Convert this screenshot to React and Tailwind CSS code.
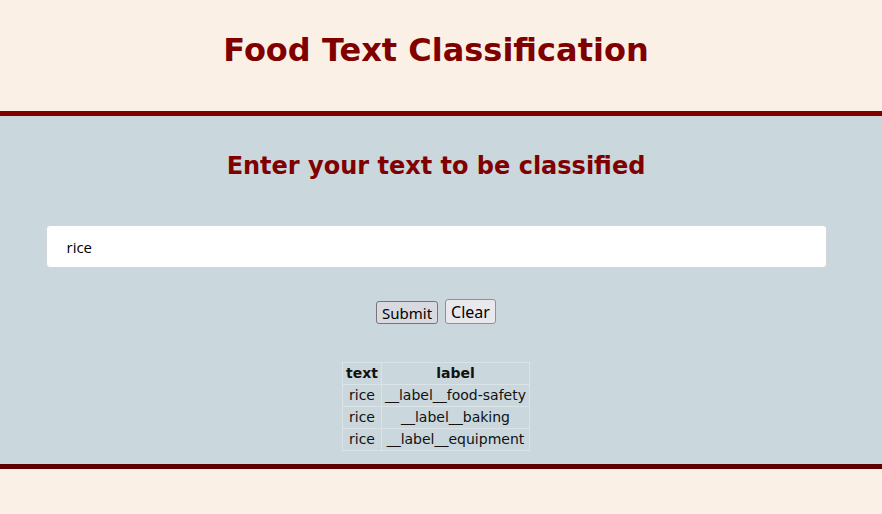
import { useState } from "react";

const rows = [
  { text: "rice", label: "__label__food-safety" },
  { text: "rice", label: "__label__baking" },
  { text: "rice", label: "__label__equipment" },
];

export default function App() {
  const [value, setValue] = useState("rice");

  return (
    <div className="min-h-[514px] bg-[#faf0e6] font-['DejaVu_Sans',sans-serif]">
      {/* Header */}
      <header className="h-[116px] flex justify-center pt-[31px] pr-[10px] border-b-[5px] border-[#800000]">
        <h1 className="text-[32px] leading-[38px] font-bold text-[#800000]">
          Food Text Classification
        </h1>
      </header>

      <main className="h-[353px] bg-[#cad7dc] border-b-[5px] border-[#5c0000] pr-[10px] flex flex-col items-center">
        <h2 className="mt-[36px] text-[24px] leading-[28px] font-bold text-[#800000]">
          Enter your text to be classified
        </h2>

        <input
          value={value}
          onChange={(e) => setValue(e.target.value)}
          className="mt-[45px] w-[781px] h-[43px] bg-white border border-[#d3d6d8] rounded-[4px] pl-[20px] text-[15px] text-black font-['Open_Sans',sans-serif] outline-none"
        />

        <div className="mt-[31px] flex items-end gap-[7px]">
          <button className="h-[23px] px-[5px] bg-[#d8dae0] border border-[#767676] rounded-[3px] text-[15px] leading-[20px] text-black font-['Noto_Sans',sans-serif]">
            Submit
          </button>
          <button className="h-[25px] px-[5px] bg-[#e9e9ed] border border-[#8f8f9d] rounded-[3px] text-[16px] leading-[22px] text-black font-['Noto_Sans',sans-serif]">
            Clear
          </button>
        </div>

        <table className="mt-[38px] border-collapse text-[14px] text-[#111]">
          <thead>
            <tr>
              <th className="h-[22px] px-[3px] border border-[#dbe3e6] font-bold">text</th>
              <th className="h-[22px] px-[3px] border border-[#dbe3e6] font-bold">label</th>
            </tr>
          </thead>
          <tbody>
            {rows.map((r, i) => (
              <tr key={i}>
                <td className="h-[22px] px-[3px] border border-[#dbe3e6] text-center">{r.text}</td>
                <td className="h-[22px] px-[3px] border border-[#dbe3e6] text-center">{r.label}</td>
              </tr>
            ))}
          </tbody>
        </table>
      </main>
    </div>
  );
}
